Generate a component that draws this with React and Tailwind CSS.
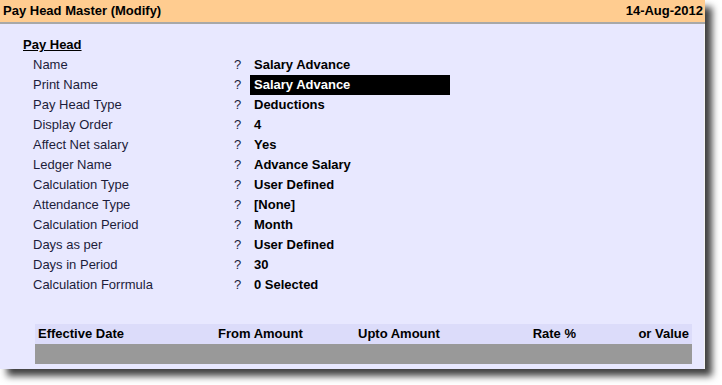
import React from 'react';

const fields = [
  ['Name', 'Salary Advance'],
  ['Print Name', 'Salary Advance', true],
  ['Pay Head Type', 'Deductions'],
  ['Display Order', '4'],
  ['Affect Net salary', 'Yes'],
  ['Ledger Name', 'Advance Salary'],
  ['Calculation Type', 'User Defined'],
  ['Attendance Type', '[None]'],
  ['Calculation Period', 'Month'],
  ['Days as per', 'User Defined'],
  ['Days in Period', '30'],
  ['Calculation Forrmula', '0 Selected'],
];

export default function App() {
  return (
    <div className="w-[722px] h-[385px] bg-white overflow-hidden text-[13px] leading-[20px] text-black" style={{ fontFamily: '"Liberation Sans", Arial, sans-serif' }}>
      <div className="w-[705px] flex flex-col shadow-[7px_7px_7px_rgba(0,0,0,0.75)]">
        {/* Title bar */}
        <div className="h-[24px] bg-[#FFCC90] border-b-2 border-[#A8A8A8] flex items-center justify-between pl-[3px] pr-[2px] font-bold">
          <span>Pay Head Master (Modify)</span>
          <span>14-Aug-2012</span>
        </div>

        {/* Body */}
        <div className="h-[345px] bg-[#E8E8FF] border-r border-[#F4F4F4] flex flex-col pt-[11px]">
          <div className="pl-[23px] font-bold underline">Pay Head</div>
          <div className="flex flex-col">
            {fields.map(([label, value, active]) => (
              <div key={label} className="flex h-[20px] items-center">
                <span className="w-[200px] pl-[33px] box-content text-[#1c1c3a]">{label}</span>
                <span className="w-[17px] pl-[1px] text-[#1c1c3a]">?</span>
                <span className={`w-[200px] pl-[4px] font-bold ${active ? 'bg-black text-white' : ''}`}>{value}</span>
              </div>
            ))}
          </div>

          {/* Rate table */}
          <div className="mt-[29px] ml-[35px] w-[657px] flex flex-col font-bold">
            <div className="h-[20px] bg-[#DCDCFA] flex items-center">
              <span className="w-[180px] pl-[3px]">Effective Date</span>
              <span className="w-[140px] pl-[3px]">From Amount</span>
              <span className="w-[124px] pl-[3px]">Upto Amount</span>
              <span className="w-[100px] pr-[3px] text-right">Rate %</span>
              <span className="flex-1 pr-[3px] text-right">or Value</span>
            </div>
            <div className="h-[20px] bg-[#999999]" />
          </div>
        </div>
      </div>
    </div>
  );
}
